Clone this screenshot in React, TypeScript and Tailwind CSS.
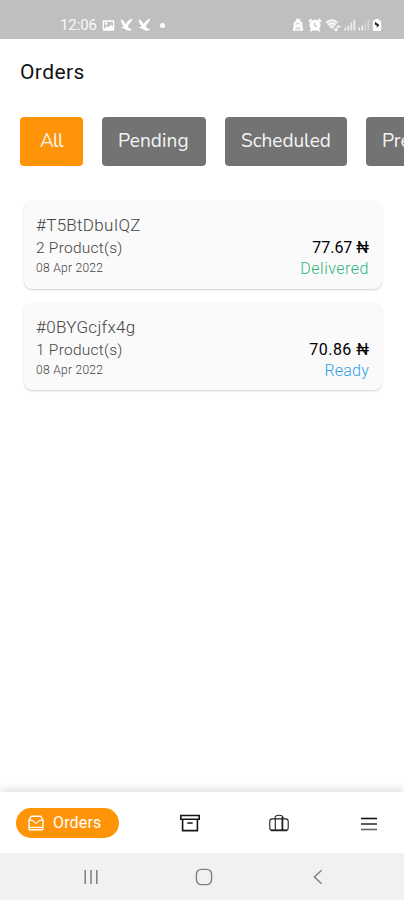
const FILTERS = [
  { label: "All", className: "w-[63px] bg-[#ff9408] tracking-[-0.8px]" },
  { label: "Pending", className: "w-[104px] bg-[#737373] tracking-[0.1px]" },
  { label: "Scheduled", className: "w-[122px] bg-[#737373]" },
  { label: "Preparing", className: "w-[120px] bg-[#737373]" },
];

const ORDERS = [
  {
    id: "#T5BtDbuIQZ",
    products: "2 Product(s)",
    date: "08 Apr 2022",
    price: "77.67 ₦",
    priceClass: "",
    status: "Delivered",
    statusClass: "text-[#2fb57c] tracking-[0.5px]",
    cardClass: "h-[88px]",
  },
  {
    id: "#0BYGcjfx4g",
    products: "1 Product(s)",
    date: "08 Apr 2022",
    price: "70.86 ₦",
    priceClass: "tracking-[0.5px] -mr-[0.5px]",
    status: "Ready",
    statusClass: "text-[#2f9fe8] tracking-[0.2px]",
    cardClass: "h-[87px]",
  },
];

function Bird() {
  return (
    <svg width="14" height="14" viewBox="0 0 14 14" fill="#fff">
      <path d="M0.6 1.2C2.8 1.6 5 4 5.6 6.4C6.4 3.8 8.8 1.6 12.8 0.4C11.2 2.2 11.8 3.4 9.8 5.2C8.8 6.2 8.2 7.2 7.8 8.4C8.8 10 10.4 11 13 11.6C10.2 13.4 6.6 13 4.6 10.8C3.4 10.6 2.2 10.2 0.8 9.6L4 8.6C2.2 6.6 0.8 4 0.6 1.2Z" />
    </svg>
  );
}

function Signal({ level }: { level: number }) {
  return (
    <svg width="12" height="12" viewBox="0 0 12 12" fill="#fff">
      {[3, 5, 8, 11].map((h, i) => (
        <rect
          key={h}
          x={0.5 + i * 3}
          y={11.5 - h}
          width="1.7"
          height={h}
          opacity={i < level ? 0.75 : 0.35}
        />
      ))}
    </svg>
  );
}

function StatusBar() {
  return (
    <div className="flex h-[39px] shrink-0 items-end justify-between bg-[#bfbfbf] pb-[7px] pl-[60px] pr-[22px] text-white">
      <div className="flex h-[14px] items-center">
        <span className="w-[42px] whitespace-nowrap text-[15px] leading-[14px] tracking-[-0.1px] opacity-90">
          12:06
        </span>
        <svg width="13" height="13" viewBox="0 0 13 13" className="mr-[5px]">
          <rect x="0.7" y="1.2" width="11.6" height="10.6" rx="1.2" fill="#fff" />
          <rect x="2.1" y="2.8" width="8.8" height="7.2" fill="#bfbfbf" />
          <path d="M2.1 10L5 7L6.6 8.4L9 5.6L10.9 8V10ZM3 3.6H5.4V5.8H3Z" fill="#fff" />
        </svg>
        <Bird />
        <div className="w-[4px]" />
        <Bird />
        <div className="ml-[8px] size-[5px] rounded-full bg-white" />
      </div>
      <div className="flex h-[14px] items-center">
        <svg width="12" height="14" viewBox="0 0 12 14" className="mr-[4px]">
          <path d="M4.2 0.8H7.8V2.4L10.4 5V9.4L11 10V12.8H1V10L1.6 9.4V5L4.2 2.4Z" fill="#fff" />
          <path d="M4 7.2A2 2 0 0 1 8 6.8M8 8.2A2 2 0 0 1 4.2 8.6M3 10.9H9" fill="none" stroke="#bfbfbf" strokeWidth="0.8" />
        </svg>
        <svg width="14" height="14" viewBox="0 0 14 14" className="mr-[3px]">
          <path d="M1 3.4L3.8 1.2M13 3.4L10.2 1.2M2.4 13L4.4 11M11.6 13L9.6 11" stroke="#fff" strokeWidth="1.9" />
          <circle cx="7" cy="7.2" r="5.5" fill="#fff" />
          <path d="M6.6 4.4V7.6L9.2 8.6" fill="none" stroke="#bfbfbf" strokeWidth="1.1" />
        </svg>
        <svg width="17" height="14" viewBox="0 0 17 14" className="mr-[2px]">
          <path d="M0.8 4.6C4 0.6 9.4 0.6 12.6 4.6L6.8 11.6Z" fill="#fff" opacity="0.55" />
          <path d="M1 4.6C4.2 0.8 9.2 0.8 12.4 4.6M3 7C5.2 4.6 8.2 4.6 10.4 7M5 9.3C6 8.3 7.4 8.3 8.4 9.3" fill="none" stroke="#fff" strokeWidth="1.1" />
          <path d="M9 10.5L11 12.5L12.8 10.5M11.5 9.5L13.5 8L15.3 9.5" fill="none" stroke="#fff" strokeWidth="1.3" />
        </svg>
        <Signal level={4} />
        <div className="w-[2px]" />
        <Signal level={2} />
        <svg width="10" height="14" viewBox="0 0 10 14" className="ml-[2px]">
          <path d="M3.2 1H6.8V2.4H8.2Q9.2 2.4 9.2 3.4V12Q9.2 13 8.2 13H1.8Q0.8 13 0.8 12V3.4Q0.8 2.4 1.8 2.4H3.2Z" fill="#fff" />
          <path d="M3 3.8L7.4 7L4.8 9.8V7.4L2.8 6.4Z" fill="#222" />
        </svg>
      </div>
    </div>
  );
}

function OrderCard({ order }: { order: (typeof ORDERS)[number] }) {
  return (
    <div
      className={`flex justify-between rounded-[8px] bg-[#fafafa] pl-[12px] pr-[13px] shadow-[0_1px_2px_rgba(0,0,0,0.18)] ${order.cardClass}`}
    >
      <div className="flex flex-col whitespace-nowrap pt-[13px] font-light text-[#444]">
        <span className="text-[17px] leading-[23px] tracking-[0.3px]">{order.id}</span>
        <span className="text-[15.5px] leading-[22px] tracking-[0.25px] text-[#444]">{order.products}</span>
        <span className="text-[12px] leading-[19px] tracking-[0.3px] text-[#444]">{order.date}</span>
      </div>
      <div className="flex flex-col items-end whitespace-nowrap pt-[36px]">
        <span className={`text-[16px] leading-[22px] text-black ${order.priceClass}`}>{order.price}</span>
        <span className={`text-[16px] font-light leading-[20px] ${order.statusClass}`}>{order.status}</span>
      </div>
    </div>
  );
}

function BottomNav() {
  return (
    <nav className="flex h-[61px] shrink-0 items-center bg-white pl-[16px] shadow-[0_-3px_8px_rgba(0,0,0,0.12)]">
      <div className="flex h-[30px] w-[103px] items-center rounded-full bg-[#ff9408] pl-[12px] text-white">
        <svg width="16" height="16" viewBox="0 0 16 16" fill="none" stroke="#fff" strokeWidth="1.4" strokeLinejoin="round">
          <path d="M3.3 1.2H12.7L15 5V13.4Q15 14.8 13.6 14.8H2.4Q1 14.8 1 13.4V5Z" />
          <path d="M1 5.4H4.4L8 8.6L11.6 5.4H15M1 12.4H15" strokeWidth="1.1" />
        </svg>
        <span className="ml-[9px] whitespace-nowrap text-[16px] leading-[20px] tracking-[0.15px]">Orders</span>
      </div>
      <svg width="20" height="18" viewBox="0 0 20 18" className="ml-[61px]" fill="none" stroke="#151515" strokeWidth="1.6">
        <path d="M0.8 1.5H19.2V5.3H0.8ZM2.6 5.3V16.6H17.4V5.3M7.3 9H12.7" />
      </svg>
      <svg width="20" height="18" viewBox="0 0 20 18" className="ml-[69px]" fill="none" stroke="#222" strokeWidth="1.3">
        <path d="M3.2 4.9H16.8Q19.2 4.9 19.2 7.3V14Q19.2 16.4 16.8 16.4H3.2Q0.8 16.4 0.8 14V7.3Q0.8 4.9 3.2 4.9Z" strokeWidth="1.1" />
        <path d="M6 4.9V4Q6 1.2 10 1.2Q14 1.2 14 4V4.9M6.3 4.9V16.4" strokeWidth="1.1" />
        <path d="M13.4 3V16.4M2 16.4H18" strokeWidth="1.8" />
      </svg>
      <svg width="18" height="14" viewBox="0 0 18 14" className="ml-[71px] mt-[2px]" fill="none" strokeWidth="1.6">
        <path d="M1 1.5H17" stroke="#111" />
        <path d="M1 7H17" stroke="#333" />
        <path d="M1 12.5H17" stroke="#666" />
      </svg>
    </nav>
  );
}

function SystemNav() {
  return (
    <div className="flex h-[47px] shrink-0 items-center bg-[#f1f1f1] pl-[83px]">
      <svg width="16" height="16" viewBox="0 0 16 16" stroke="#858585" strokeWidth="1.6">
        <path d="M2.2 1V15M8 1V15M13.8 1V15" />
      </svg>
      <svg width="18" height="18" viewBox="0 0 18 18" className="ml-[96px]" fill="none" stroke="#808080" strokeWidth="1.4">
        <rect x="1.4" y="1.4" width="15.2" height="15.2" rx="5" />
      </svg>
      <svg width="10" height="16" viewBox="0 0 10 16" className="ml-[100px]" fill="none" stroke="#808080" strokeWidth="1.4">
        <path d="M8.6 1.2L1.4 8L8.6 14.8" />
      </svg>
    </div>
  );
}

export default function App() {
  return (
    <div className="flex h-[900px] w-[404px] flex-col overflow-hidden bg-white font-[Roboto,sans-serif]">
      <StatusBar />
      <main className="flex min-h-0 flex-1 flex-col">
        <h1 className="mt-[19px] pl-[20px] text-[21px] leading-[28px] tracking-[0.4px] text-[#111]">Orders</h1>
        <div className="mt-[31px] flex shrink-0 gap-[19px] overflow-hidden pl-[20px]">
          {FILTERS.map((filter) => (
            <div
              key={filter.label}
              className={`flex h-[49px] shrink-0 items-center whitespace-nowrap rounded-[4px] pl-[16px] font-[Nunito,Lato,sans-serif] text-[19px] text-[#f5f5f5] first:pl-[20px] ${filter.className}`}
            >
              {filter.label}
            </div>
          ))}
        </div>
        <div className="mt-[35px] flex flex-col gap-[14px] pl-[24px] pr-[22px]">
          {ORDERS.map((order) => (
            <OrderCard key={order.id} order={order} />
          ))}
        </div>
      </main>
      <BottomNav />
      <SystemNav />
    </div>
  );
}
